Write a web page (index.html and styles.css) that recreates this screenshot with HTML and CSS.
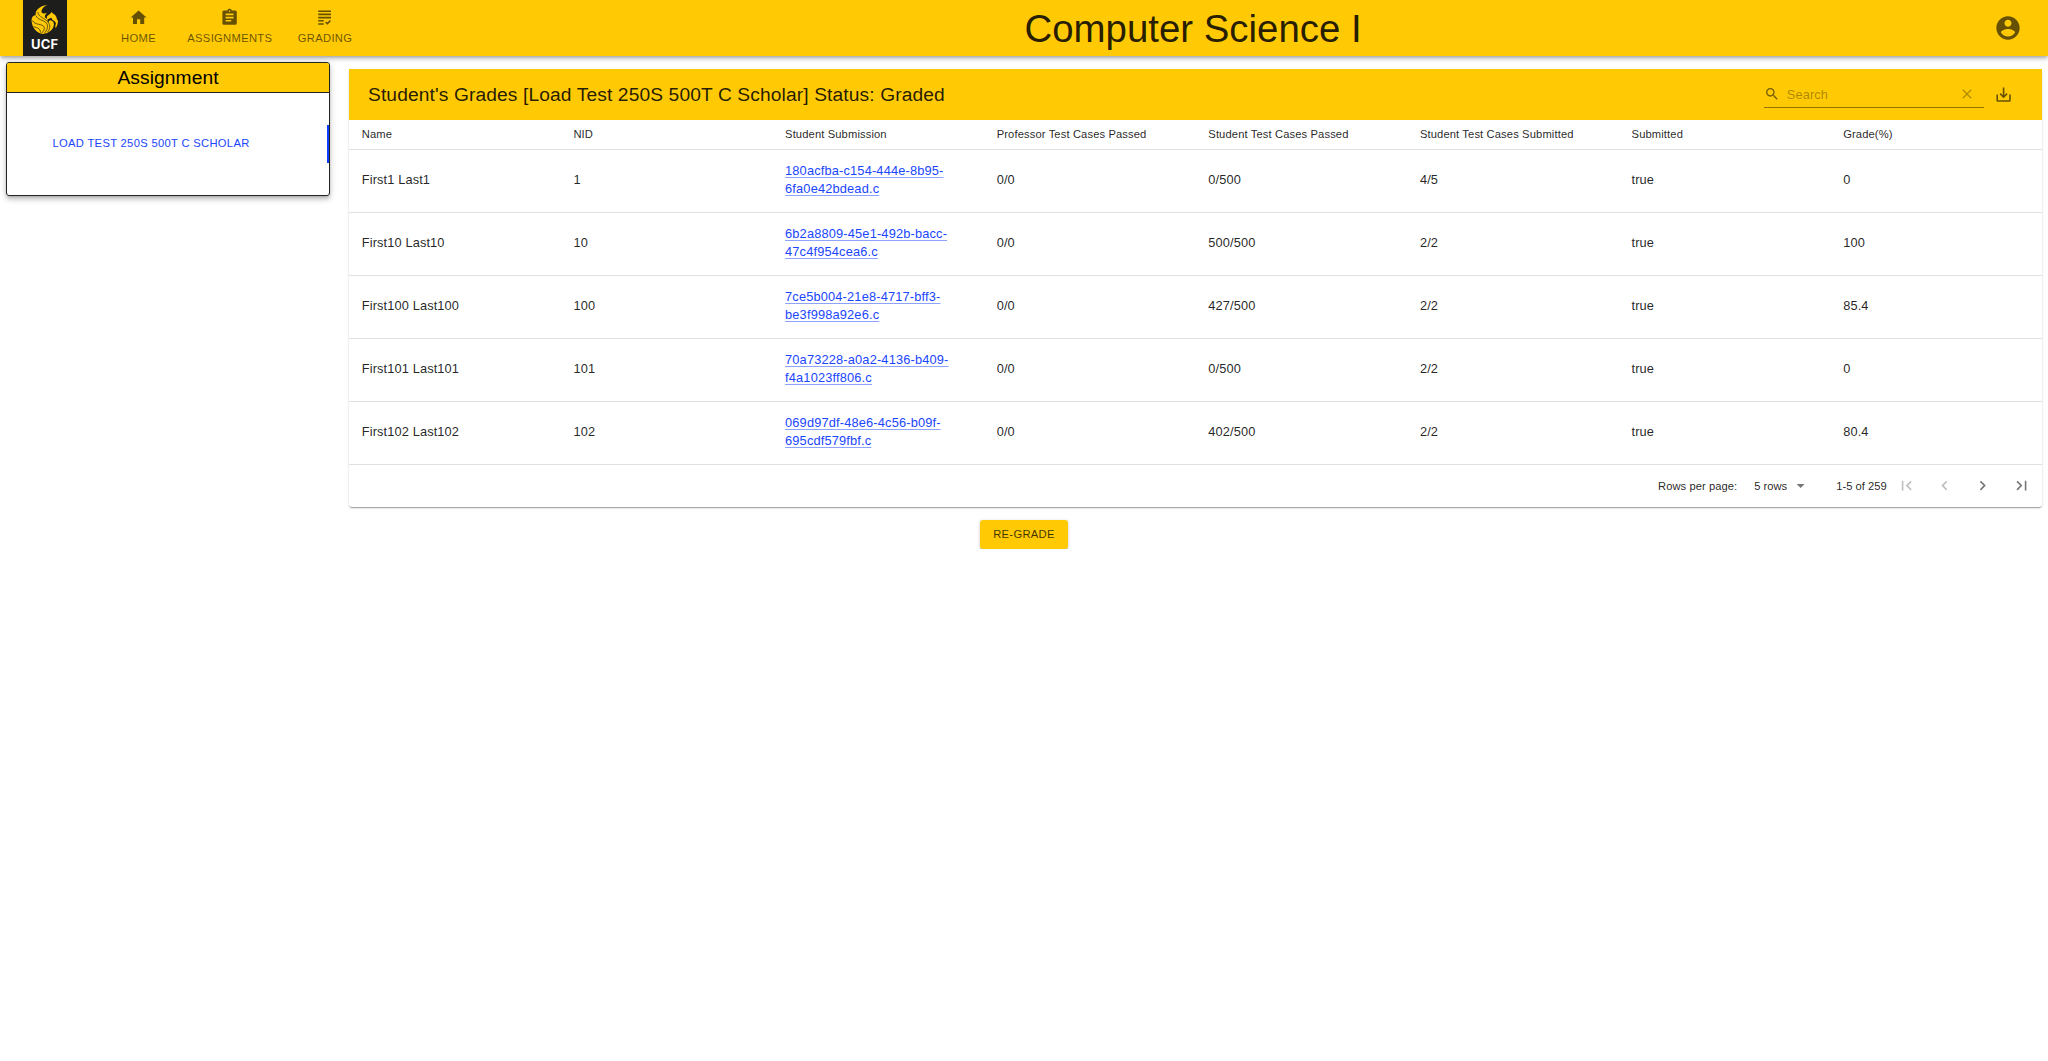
FILE: index.html
```
<!DOCTYPE html>
<html lang="en">
<head>
<meta charset="utf-8">
<title>Computer Science I</title>
<link rel="stylesheet" href="styles.css">
</head>
<body>
<header class="appbar">
  <div class="logo">
    <svg class="pegasus" viewBox="0 0 80 86">
      <path fill="#ffc904" d="M48 0C25 3 11 16 14 31C6 28 0 41 2 50C4 68 16 84 35 86C53 84 66 74 68 58L66 50L60 46C56 44 53 47 52 51C48 49 50 44 48 41C38 38 40 29 48 23C37 27 30 25 31 17C33 9 40 4 48 0Z"/>
      <path fill="#ffc904" d="M47 33L57 26L61 21L65 25C72 28 77 35 77 43L80 46L79 56L76 64L73 69L72 62L74 54L70 48L63 44C63 38 57 37 54 41L48 43Z"/>
      <path fill="none" stroke="#1d1d1b" stroke-width="2" d="M15 32C20 44 34 44 42 50C55 60 47 77 39 84M4 46C10 60 34 55 39 65C42 73 35 79 31 84M8 64C18 69 27 67 28 82M20 21C23 38 40 37 50 50C59 61 56 72 49 80"/>
    </svg>
    <span class="logo-text">UCF</span>
  </div>
  <nav class="tabs">
    <a class="tab"><svg class="icon" viewBox="0 0 24 24"><path d="M10 20v-6h4v6h5v-8h3L12 3 2 12h3v8z"/></svg><span>HOME</span></a>
    <a class="tab"><svg class="icon" viewBox="0 0 24 24"><path d="M19 3h-4.180C14.400 1.840 13.300 1 12 1c-1.300 0-2.400.84-2.820 2H5c-1.100 0-2 .9-2 2v14c0 1.100.9 2 2 2h14c1.100 0 2-.9 2-2V5c0-1.100-.9-2-2-2zm-7 0c.55 0 1 .45 1 1s-.45 1-1 1-1-.45-1-1 .45-1 1-1zm2 14H7v-2h7v2zm3-4H7v-2h10v2zm0-4H7V7h10v2z"/></svg><span>ASSIGNMENTS</span></a>
    <a class="tab"><svg class="icon" viewBox="0 0 24 24"><path d="M4 7h16v2H4V7zm0 6h16v-2H4v2zm0 4h7v-2H4v2zm0 4h7v-2H4v2zm11.410-2.830L14 16.750l-1.410 1.410L15.410 21 20 16.420 18.580 15l-3.170 3.170zM4 3v2h16V3H4z"/></svg><span>GRADING</span></a>
  </nav>
  <h1 class="course">Computer Science I</h1>
  <svg class="account" viewBox="0 0 24 24"><path d="M12 2C6.480 2 2 6.480 2 12s4.480 10 10 10 10-4.480 10-10S17.520 2 12 2zm0 3c1.660 0 3 1.340 3 3s-1.340 3-3 3-3-1.340-3-3 1.340-3 3-3zm0 14.200c-2.500 0-4.710-1.280-6-3.220.03-1.990 4-3.080 6-3.080 1.990 0 5.970 1.090 6 3.080-1.290 1.940-3.500 3.220-6 3.220z"/></svg>
</header>

<main class="content">
  <aside class="assignments">
    <h2 class="assignments-title">Assignment</h2>
    <div class="assignments-list"><a class="assignment">LOAD TEST 250S 500T C SCHOLAR</a></div>
  </aside>

  <section class="grades">
    <div class="toolbar">
      <h2 class="toolbar-title">Student's Grades [Load Test 250S 500T C Scholar] Status: Graded</h2>
      <div class="search">
        <svg class="search-icon" viewBox="0 0 24 24"><path d="M15.500 14h-.79l-.28-.27C15.410 12.590 16 11.110 16 9.500 16 5.910 13.090 3 9.500 3S3 5.910 3 9.500 5.910 16 9.500 16c1.610 0 3.090-.59 4.230-1.570l.27.28v.79l5 4.990L20.490 19l-4.990-5zm-6 0C7.010 14 5 11.990 5 9.500S7.010 5 9.500 5 14 7.010 14 9.500 11.990 14 9.500 14z"/></svg>
        <span class="search-hint">Search</span>
        <svg class="clear-icon" viewBox="0 0 24 24"><path d="M19 6.410L17.590 5 12 10.590 6.410 5 5 6.410 10.590 12 5 17.590 6.410 19 12 13.410 17.590 19 19 17.590 13.410 12z"/></svg>
      </div>
      <svg class="icon export" viewBox="0 0 24 24"><path d="M19 12v7H5v-7H3v7c0 1.100.9 2 2 2h14c1.100 0 2-.9 2-2v-7h-2zm-6 .67l2.590-2.580L17 11.500l-5 5-5-5 1.410-1.410L11 12.670V3h2z"/></svg>
    </div>
    <table class="table">
      <thead>
        <tr><th>Name</th><th>NID</th><th>Student Submission</th><th>Professor Test Cases Passed</th><th>Student Test Cases Passed</th><th>Student Test Cases Submitted</th><th>Submitted</th><th>Grade(%)</th></tr>
      </thead>
      <tbody>
        <tr><td>First1 Last1</td><td>1</td><td><a class="file">180acfba-c154-444e-8b95-<br>6fa0e42bdead.c</a></td><td>0/0</td><td>0/500</td><td>4/5</td><td>true</td><td>0</td></tr>
        <tr><td>First10 Last10</td><td>10</td><td><a class="file">6b2a8809-45e1-492b-bacc-<br>47c4f954cea6.c</a></td><td>0/0</td><td>500/500</td><td>2/2</td><td>true</td><td>100</td></tr>
        <tr><td>First100 Last100</td><td>100</td><td><a class="file">7ce5b004-21e8-4717-bff3-<br>be3f998a92e6.c</a></td><td>0/0</td><td>427/500</td><td>2/2</td><td>true</td><td>85.4</td></tr>
        <tr><td>First101 Last101</td><td>101</td><td><a class="file">70a73228-a0a2-4136-b409-<br>f4a1023ff806.c</a></td><td>0/0</td><td>0/500</td><td>2/2</td><td>true</td><td>0</td></tr>
        <tr><td>First102 Last102</td><td>102</td><td><a class="file">069d97df-48e6-4c56-b09f-<br>695cdf579fbf.c</a></td><td>0/0</td><td>402/500</td><td>2/2</td><td>true</td><td>80.4</td></tr>
      </tbody>
    </table>
    <div class="pager">
      <span class="pager-label">Rows per page:</span>
      <span class="pager-size">5 rows</span>
      <svg class="icon pager-arrow" viewBox="0 0 24 24"><path d="M7 10l5 5 5-5z"/></svg>
      <span class="pager-range">1-5 of 259</span>
      <div class="pager-buttons">
        <svg class="icon off" viewBox="0 0 24 24"><path d="M18.410 16.590L13.820 12l4.590-4.590L17 6l-6 6 6 6zM6 6h2v12H6z"/></svg>
        <svg class="icon off" viewBox="0 0 24 24"><path d="M15.410 7.410L14 6l-6 6 6 6 1.410-1.410L10.830 12z"/></svg>
        <svg class="icon" viewBox="0 0 24 24"><path d="M10 6L8.590 7.410 13.170 12l-4.580 4.590L10 18l6-6z"/></svg>
        <svg class="icon" viewBox="0 0 24 24"><path d="M5.590 7.410L10.180 12l-4.590 4.590L7 18l6-6-6-6zM16 6h2v12h-2z"/></svg>
      </div>
    </div>
  </section>
</main>
<div class="actions"><button class="regrade">RE-GRADE</button></div>
</body>
</html>
```
FILE: styles.css
```
* { box-sizing: border-box; }

body {
  margin: 0;
  background: #fff;
  color: rgba(0, 0, 0, .87);
  font-family: "Liberation Sans", Arial, sans-serif;
  font-size: 12.8px;
}

h1, h2 { margin: 0; font-weight: 400; }
svg { display: block; flex: none; fill: currentColor; }
.icon { width: 19.2px; height: 19.2px; }

/* App bar */
.appbar {
  display: flex;
  align-items: center;
  height: 56px;
  padding: 0 25px 0 23px;
  background: #ffc904;
  box-shadow: 0 2px 3px -1px rgba(0, 0, 0, .2), 0 3px 4px rgba(0, 0, 0, .14), 0 1px 8px rgba(0, 0, 0, .12);
}
.logo {
  display: flex;
  flex-direction: column;
  align-items: center;
  width: 43.500px;
  height: 56px;
  padding-top: 5px;
  background: #1d1d1b;
}
.pegasus { width: 27px; height: 29px; }
.logo-text {
  margin-top: 3px;
  color: #fff;
  font: 700 13px/14px Inter, "Liberation Sans", sans-serif;
  letter-spacing: .2px;
}
.tabs { display: flex; margin-left: 36px; padding-bottom: 2px; }
.tab {
  display: flex;
  flex-direction: column;
  align-items: center;
  gap: 4px;
  min-width: 72px;
  padding: 0 12.8px;
  color: rgba(0, 0, 0, .6);
  font-size: 11.2px;
  letter-spacing: .32px;
}
.tab span { line-height: 15px; }
.course {
  flex: 1;
  margin-left: 27px;
  padding-top: 2px;
  text-align: center;
  font-size: 38.4px;
  line-height: 54px;
}
.account { width: 28px; height: 28px; margin: 0 1px 1px 0; color: rgba(0, 0, 0, .6); }

/* Page body */
.content {
  display: grid;
  grid-template-columns: 324px 1693px;
  column-gap: 19px;
  align-items: start;
  padding: 6px 0 0 6px;
}

/* Assignment card */
.assignments {
  height: 134px;
  border: 1px solid #222;
  border-radius: 3px;
  box-shadow: 0 2px 3px -1px rgba(0, 0, 0, .2), 0 4px 5px rgba(0, 0, 0, .14), 0 1px 8px rgba(0, 0, 0, .12);
}
.assignments-title {
  height: 30px;
  border-bottom: 1px solid #222;
  border-radius: 2px 2px 0 0;
  background: #ffc904;
  color: #000;
  font-size: 19.2px;
  line-height: 29px;
  letter-spacing: .1px;
  text-align: center;
}
.assignments-list { padding-top: 32px; }
.assignment {
  display: block;
  height: 38px;
  padding-left: 45.500px;
  border-right: 2px solid #0a3cff;
  color: #1a46ff;
  font-size: 11.2px;
  line-height: 37px;
  letter-spacing: .32px;
}

/* Grades table */
.grades {
  height: 438px;
  margin-top: 7px;
  border-radius: 3px;
  box-shadow: 0 2px 1px -1px rgba(0, 0, 0, .2), 0 1px 1px rgba(0, 0, 0, .14), 0 1px 3px rgba(0, 0, 0, .12);
}
.toolbar {
  display: flex;
  align-items: center;
  height: 51px;
  padding: 0 29px 0 19px;
  background: #ffc904;
}
.toolbar-title { flex: 1; font-size: 19.2px; line-height: 50px; letter-spacing: .12px; }
.search {
  display: flex;
  align-items: center;
  width: 220px;
  height: 26px;
  margin-right: 10px;
  border-bottom: 1px solid rgba(0, 0, 0, .42);
}
.search-icon { width: 16px; height: 16px; color: rgba(0, 0, 0, .54); }
.search-hint { flex: 1; padding-left: 7px; color: rgba(0, 0, 0, .34); letter-spacing: .12px; }
.clear-icon { width: 16px; height: 16px; margin-right: 9px; color: rgba(0, 0, 0, .3); }
.export { color: rgba(0, 0, 0, .6); }

.table { width: 100%; table-layout: fixed; border-collapse: separate; border-spacing: 0; }
.table th, .table td {
  padding: 0 12.8px 1.600px;
  border-bottom: 1px solid #e0e0e0;
  text-align: left;
  font-weight: 400;
}
.table th { height: 30px; font-size: 11.2px; letter-spacing: .12px; }
.table td { height: 63px; line-height: 18.3px; letter-spacing: .12px; }
.file {
  color: #1a46ff;
  letter-spacing: .17px;
  text-decoration: underline;
  text-decoration-color: #8da3ff;
  text-underline-offset: 2px;
}

.pager {
  display: flex;
  align-items: center;
  justify-content: flex-end;
  height: 42px;
  padding-right: 11px;
  font-size: 11.2px;
}
.pager-label { letter-spacing: .05px; }
.pager-size { margin-left: 17px; padding-bottom: 1px; }
.pager-arrow { margin-left: 4px; color: rgba(0, 0, 0, .54); }
.pager-range { margin-left: 26px; }
.pager-buttons { display: flex; gap: 19.2px; margin-left: 10px; color: rgba(0, 0, 0, .54); }
.off { color: rgba(0, 0, 0, .26); }

.actions { display: flex; justify-content: center; padding-top: 13px; }
.regrade {
  width: 88px;
  height: 29px;
  padding: 0;
  border: 0;
  border-radius: 3px;
  background: #ffc904;
  box-shadow: 0 2px 1px -1px rgba(0, 0, 0, .2), 0 1px 2px rgba(0, 0, 0, .14), 0 1px 4px rgba(0, 0, 0, .12);
  color: rgba(0, 0, 0, .75);
  font: 11.2px/29px "Liberation Sans", Arial, sans-serif;
  letter-spacing: .32px;
}
```
